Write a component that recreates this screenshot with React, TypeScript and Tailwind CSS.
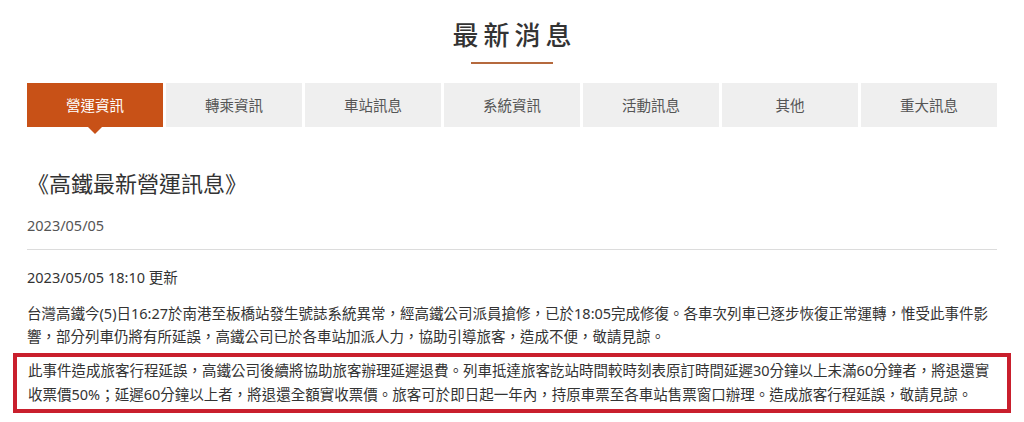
import React from "react";

const tabs = ["營運資訊", "轉乘資訊", "車站訊息", "系統資訊", "活動訊息", "其他", "重大訊息"];

export default function App() {
  return (
    <div
      className="w-[1024px] h-[422px] bg-white overflow-hidden text-[#333]"
      style={{ fontFamily: '"Noto Sans", "Noto Sans CJK TC", sans-serif' }}
    >
      <div className="flex flex-col items-center pt-[16px]">
        <h1
          className="text-[26px] leading-[36px] tracking-[5px] pl-[5px] text-[#333] font-medium"
          style={{ fontFamily: '"Noto Sans CJK TC", sans-serif' }}
        >
          最新消息
        </h1>
        <div className="mt-[10px] h-[2px] w-[82px] bg-[#b5693d]" />
      </div>

      <div className="mx-[27px] w-[970px]">
        <div className="mt-[19px] flex gap-[3px]">
          {tabs.map((t, i) => (
            <div
              key={t}
              className={
                i === 0
                  ? "relative flex h-[44px] w-[136px] items-center justify-center bg-[#c85117] text-[14.5px] text-white"
                  : "relative flex h-[44px] w-[136px] items-center justify-center bg-[#efefef] text-[14.5px] text-[#555]"
              }
              style={{ fontFamily: '"Noto Sans CJK TC", sans-serif' }}
            >
              {t}
              {i === 0 && (
                <div className="absolute left-1/2 top-full -translate-x-1/2 h-0 w-0 border-l-[7px] border-r-[7px] border-t-[7px] border-l-transparent border-r-transparent border-t-[#c85117]" />
              )}
            </div>
          ))}
        </div>

        <h2
          className="mt-[39px] text-[22px] leading-[32px] text-[#333] font-normal"
          style={{ fontFamily: '"Noto Sans CJK TC", sans-serif' }}
        >
          《高鐵最新營運訊息》
        </h2>

        <div className="mt-[15px] text-[14.5px] leading-[24px] text-[#555]">2023/05/05</div>
        <div className="mt-[12px] h-px bg-[#dcdcdc]" />

        <div className="mt-[15px] text-[14.5px] leading-[24px] text-[#333]">2023/05/05 18:10 更新</div>

        <p className="mt-[13px] text-[14.5px] leading-[23px] text-[#333]">
          台灣高鐵今(5)日16:27於南港至板橋站發生號誌系統異常，經高鐵公司派員搶修，已於18:05完成修復。各車次列車已逐步恢復正常運轉，惟受此事件影響，部分列車仍將有所延誤，高鐵公司已於各車站加派人力，協助引導旅客，造成不便，敬請見諒。
        </p>

        <div className="-mx-[14px] mt-[5px] border-[4px] border-[#c91f2d] pl-[11px] pr-[10px] pt-[1px] pb-[3px]">
          <p className="text-[14.5px] leading-[24px] text-[#333]">
            此事件造成旅客行程延誤，高鐵公司後續將協助旅客辦理延遲退費。列車抵達旅客訖站時間較時刻表原訂時間延遲30分鐘以上未滿60分鐘者，將退還實收票價50%；延遲60分鐘以上者，將退還全額實收票價。旅客可於即日起一年內，持原車票至各車站售票窗口辦理。造成旅客行程延誤，敬請見諒。
          </p>
        </div>
      </div>
    </div>
  );
}
